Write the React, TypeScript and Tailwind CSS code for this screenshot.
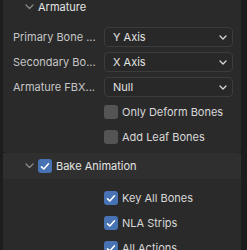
import React from "react";

const Chevron = ({ className = "" }: { className?: string }) => (
  <svg width="9" height="6" viewBox="0 0 9 6" className={className}>
    <path d="M1 1 L4.5 4.5 L8 1" fill="none" stroke="currentColor" strokeWidth="1.3" strokeLinecap="round" strokeLinejoin="round" />
  </svg>
);

const SmallChevron = () => (
  <svg width="8" height="5" viewBox="0 0 8 5">
    <path d="M1 1 L4 4 L7 1" fill="none" stroke="#d8d8d8" strokeWidth="1.3" strokeLinecap="round" strokeLinejoin="round" />
  </svg>
);

const Check = ({ checked }: { checked: boolean }) => (
  <div
    className={
      checked
        ? "w-[14px] h-[14px] rounded-[3px] bg-[#4772b3] flex items-center justify-center shrink-0"
        : "w-[14px] h-[14px] rounded-[3px] bg-[#545454] shrink-0"
    }
  >
    {checked && (
      <svg width="10" height="9" viewBox="0 0 10 9">
        <path d="M1.5 4.8 L3.8 7 L8.5 1.8" fill="none" stroke="#ffffff" strokeWidth="1.6" strokeLinecap="round" strokeLinejoin="round" />
      </svg>
    )}
  </div>
);

const Dropdown = ({ label, value }: { label: string; value: string }) => (
  <div className="flex items-center h-[20px] shrink-0">
    <div className="w-[101px] pl-[10px] text-[11px] text-[#c6c6c6] whitespace-nowrap">
      {label}
    </div>
    <div className="w-[129px] h-[20px] rounded-[4px] bg-[#282828] border border-[#3c3c3c] flex items-center justify-between pl-[8px] pr-[5px]">
      <span className="text-[11px] text-[#e2e2e2]">{value}</span>
      <SmallChevron />
    </div>
  </div>
);

const CheckRow = ({ label, checked }: { label: string; checked: boolean }) => (
  <div className="flex items-center h-[20px] pl-[101px] shrink-0">
    <Check checked={checked} />
    <span className="ml-[4px] text-[11px] text-[#d8d8d8] whitespace-nowrap">{label}</span>
  </div>
);

export default function App() {
  return (
    <div
      className="w-[247px] h-[250px] bg-[#1d1d1d] flex overflow-hidden"
      style={{ fontFamily: "Inter, 'Noto Sans', sans-serif" }}
    >
      <div className="ml-[3px] w-[238px] flex flex-col">
        <div className="h-[153px] shrink-0 bg-[#2a2a2a] rounded-b-[4px] flex flex-col">
          <div className="h-[14px] flex items-center pl-[22px]">
            <Chevron className="text-[#8a8a8a]" />
            <span className="ml-[4px] text-[11px] text-[#e4e4e4]">Armature</span>
          </div>
          <div className="pt-[13px] flex flex-col gap-[5px]">
            <Dropdown label="Primary Bone ..." value="Y Axis" />
            <Dropdown label="Secondary Bo..." value="X Axis" />
            <Dropdown label="Armature FBX..." value="Null" />
            <CheckRow label="Only Deform Bones" checked={false} />
            <CheckRow label="Add Leaf Bones" checked={false} />
          </div>
        </div>
        <div className="h-[26px] shrink-0 bg-[#2f2f2f] flex items-center pl-[22px]">
          <Chevron className="text-[#8a8a8a]" />
          <div className="ml-[4px]">
            <Check checked={true} />
          </div>
          <span className="ml-[4px] text-[11px] text-[#e4e4e4]">Bake Animation</span>
        </div>
        <div className="flex-1 bg-[#2a2a2a] pt-[9px] flex flex-col gap-[5px]">
          <CheckRow label="Key All Bones" checked={true} />
          <CheckRow label="NLA Strips" checked={true} />
          <CheckRow label="All Actions" checked={true} />
        </div>
      </div>
      <div className="w-[6px]" />
    </div>
  );
}
